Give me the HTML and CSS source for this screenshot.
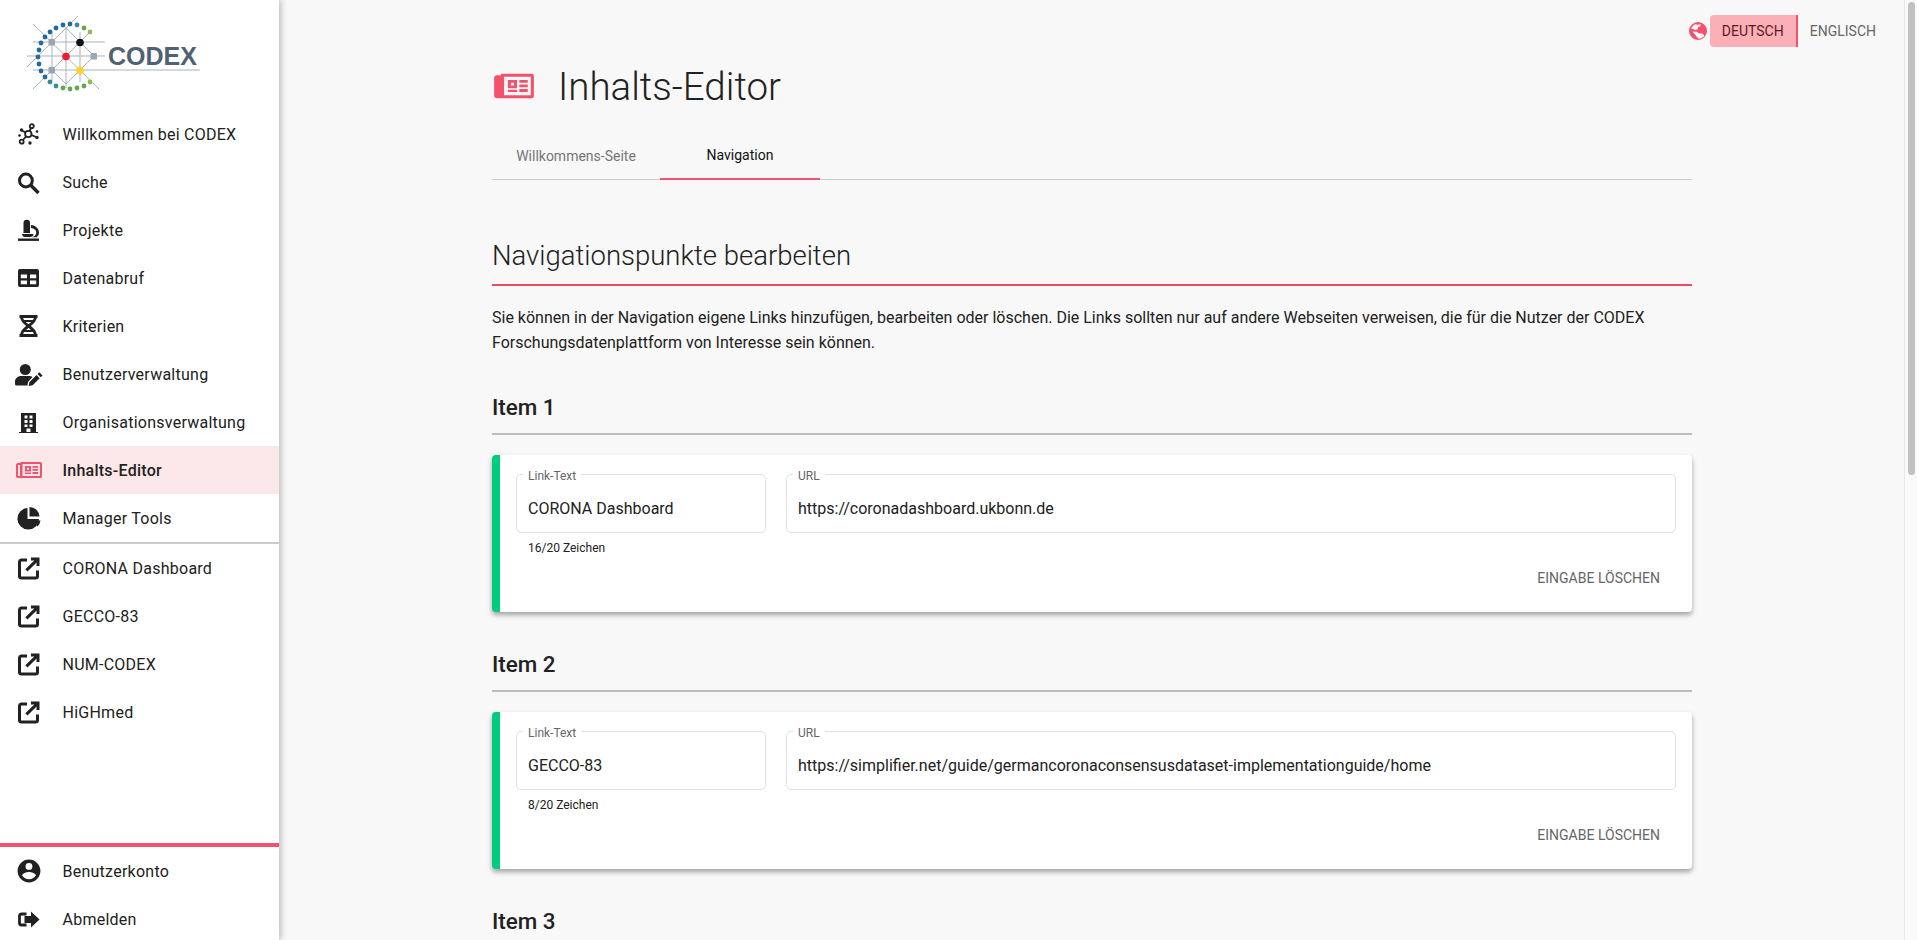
FILE: index.html
```html
<!DOCTYPE html>
<html lang="de">
<head>
    <meta charset="UTF-8">
    <meta name="viewport" content="width=device-width, initial-scale=1.0">
    <title>Inhalts-Editor</title>
    <link rel="stylesheet" href="styles.css">
</head>
<body>
    <!-- Seitennavigation -->
    <aside class="sidebar">
        <div class="logo">
            <svg width="210" height="100" viewBox="0 0 210 100">
                <g stroke="#aab3bd" stroke-width="1" fill="none">
                    <path d="M33 42H105M27 56H105M33 70H200"/>
                    <path d="M52 31V81M66 27V88M80 32V82"/>
                    <path d="M33 24L99 89M78 16L27 67M33 89L90 32M94 56L66 84M66 28L94 56M52 70L66 84"/>
                </g>
                <g fill="#1f6aa5">
                    <circle cx="63" cy="25" r="2.400"/><circle cx="70" cy="24" r="2.400"/><circle cx="56" cy="28" r="2.400"/>
                    <circle cx="50" cy="32" r="2.400"/><circle cx="45" cy="37" r="2.400"/><circle cx="41" cy="43" r="2.400"/>
                    <circle cx="39" cy="50" r="2.400"/><circle cx="38" cy="57" r="2.400"/><circle cx="39" cy="64" r="2.400"/>
                    <circle cx="41" cy="71" r="2.400"/><circle cx="45" cy="77" r="2.400"/>
                </g>
                <g fill="#3a8a9a">
                    <circle cx="77" cy="25" r="2.400"/><circle cx="50" cy="82" r="2.400"/><circle cx="56" cy="86" r="2.400"/>
                </g>
                <g fill="#5fa84f">
                    <circle cx="84" cy="28" r="2.400"/><circle cx="63" cy="88" r="2.400"/><circle cx="70" cy="89" r="2.400"/>
                    <circle cx="77" cy="88" r="2.400"/><circle cx="84" cy="86" r="2.400"/>
                </g>
                <circle cx="90" cy="32" r="2.400" fill="#8cc04a"/>
                <circle cx="90" cy="82" r="2.400" fill="#8cc04a"/>
                <g fill="#9aa6b2">
                    <rect x="48.500" y="39" width="6.500" height="6.500" rx="1"/>
                    <rect x="90.500" y="53" width="6.500" height="6.500" rx="1"/>
                    <rect x="48.500" y="67" width="6.500" height="6.500" rx="1"/>
                </g>
                <circle cx="80" cy="42.500" r="3.800" fill="#111"/>
                <circle cx="66" cy="56.500" r="3.800" fill="#ed1c2e"/>
                <circle cx="80" cy="70.500" r="3.800" fill="#fdd32a"/>
                <text x="108" y="65" class="logo-text">CODEX</text>
            </svg>
        </div>

        <nav class="nav-main">
            <a class="nav-item">
                <svg class="icon" viewBox="0 0 24 24"><g fill="none" stroke="currentColor" stroke-width="1.800"><circle cx="11.300" cy="12" r="3.200"/><circle cx="4.700" cy="19.700" r="2"/><circle cx="14.800" cy="4.200" r="2"/><path d="M12.500 9L14 6.300M9 14.500L6 18M14.500 13L19 15M8.500 10.500L5 8.500"/></g><g fill="currentColor"><circle cx="4.500" cy="8" r="1.700"/><circle cx="2.500" cy="13.500" r="1.300"/><circle cx="20" cy="15.500" r="1.700"/><circle cx="20" cy="9.500" r="1.300"/><circle cx="13" cy="21" r="1.700"/></g></svg>
                <span>Willkommen bei CODEX</span>
            </a>
            <a class="nav-item">
                <svg class="icon" viewBox="0 0 24 24"><circle cx="8.900" cy="10.500" r="6.400" fill="none" stroke="currentColor" stroke-width="3"/><path d="M13.500 15L21.500 23" fill="none" stroke="currentColor" stroke-width="3.400"/></svg>
                <span>Suche</span>
            </a>
            <a class="nav-item">
                <svg class="icon" viewBox="0 0 24 24"><path d="M6.500 5a3.200 3.200 0 0 1 6.500 0V15H6.500Z"/><path d="M14 7c4.500.5 8 3.500 8 7.500 0 2-1 3.700-2.300 4.700H15c2.500-.5 4.300-2.200 4.300-4.700 0-2.500-2.500-4.300-5.300-4.500Z"/><path d="M5 16h11.500c0 1.700-1.500 3-3.500 3H8c-1.500 0-3-1.300-3-3Z"/><rect x="1" y="20.500" width="21" height="2.400"/></svg>
                <span>Projekte</span>
            </a>
            <a class="nav-item">
                <svg class="icon" viewBox="0 0 24 24"><path fill-rule="evenodd" d="M3 3h17a2 2 0 0 1 2 2v14a2 2 0 0 1-2 2H3a2 2 0 0 1-2-2V5a2 2 0 0 1 2-2ZM3.800 8.500v3.800h6.200V8.500ZM13 8.500v3.800h6.200V8.500ZM3.800 14.500v3.800h6.200v-3.800ZM13 14.500v3.800h6.200v-3.800Z"/></svg>
                <span>Datenabruf</span>
            </a>
            <a class="nav-item">
                <svg class="icon" viewBox="0 0 24 24"><g fill="none" stroke="currentColor"><path stroke-width="2.800" d="M2.500 2.500H20.500M2.500 21.500H20.500"/><path stroke-width="2.800" d="M4.500 3c0 8 14 10 14 18M18.500 3c0 8-14 10-14 18"/><path stroke-width="1.800" d="M6 7H17M7 17H16"/></g></svg>
                <span>Kriterien</span>
            </a>
            <a class="nav-item">
                <svg class="icon" viewBox="0 0 24 24"><circle cx="8.300" cy="7.500" r="5.500"/><path d="M4 14h8.500c1.200 0 2.200.3 3 .9L11 20l-.5 3.500H-.5A1.500 1.500 0 0 1-2 22v-2.500C-2 16.500.8 14 4 14Z"/><path d="M12.500 20l7-7 3.200 3.200-7 7-4 .8ZM20.500 12l1.800-1.800 3.200 3.200-1.800 1.800Z"/></svg>
                <span>Benutzerverwaltung</span>
            </a>
            <a class="nav-item">
                <svg class="icon" viewBox="0 0 24 24"><path fill-rule="evenodd" d="M4 3H19V22H13.500V18.500H9.500V22H4ZM7.500 5.500V8.500H10.500V5.500ZM12.500 5.500V8.500H15.500V5.500ZM7.500 10V13H10.500V10ZM12.500 10V13H15.500V10ZM7.500 14.500V17H10.500V14.500ZM12.500 14.500V17H15.500V14.500Z"/><rect x="2" y="22" width="19" height="1"/></svg>
                <span>Organisationsverwaltung</span>
            </a>
            <a class="nav-item active">
                <svg class="icon icon-news" viewBox="0 0 26 17"><path fill-rule="evenodd" d="M4.500 .5H24.500A1.500 1.500 0 0 1 26 2V15A1.500 1.500 0 0 1 24.500 16.500H2A2 2 0 0 1 0 14.500V3.500A2 2 0 0 1 2 1.500H4.500ZM2 3.500V14.500H4V3.500ZM6.500 2.500V14.500H24V2.500ZM9 4.500H15V10H9ZM11 6.300V8.200H13V6.300ZM16.500 4.500H22V6.300H16.500ZM16.500 7.500H22V9.300H16.500ZM16.500 10.500H22V12.500H16.500ZM9 11H15V12.500H9Z"/></svg>
                <span>Inhalts-Editor</span>
            </a>
            <a class="nav-item">
                <svg class="icon" viewBox="0 0 24 24"><path d="M10.500 2V13H22A10.800 10.800 0 1 1 10.500 2Z"/><path d="M12.500 1A10 10 0 0 1 22.500 10.500H12.500Z"/><path d="M14.500 14.500H23.500A10 10 0 0 1 20.500 20.500Z"/></svg>
                <span>Manager Tools</span>
            </a>
        </nav>

        <nav class="nav-links">
            <a class="nav-item">
                <svg class="icon" viewBox="0 0 24 24"><path d="M10 4H4.500A2 2 0 0 0 2.500 6V20A2 2 0 0 0 4.500 22H18.500A2 2 0 0 0 20.500 20V14.500" fill="none" stroke="currentColor" stroke-width="3"/><path d="M14 1.500H22.500V10H19.500V6.500L10.500 15.500L8.300 13.300L17.300 4.500H14Z"/></svg>
                <span>CORONA Dashboard</span>
            </a>
            <a class="nav-item">
                <svg class="icon" viewBox="0 0 24 24"><path d="M10 4H4.500A2 2 0 0 0 2.500 6V20A2 2 0 0 0 4.500 22H18.500A2 2 0 0 0 20.500 20V14.500" fill="none" stroke="currentColor" stroke-width="3"/><path d="M14 1.500H22.500V10H19.500V6.500L10.500 15.500L8.300 13.300L17.300 4.500H14Z"/></svg>
                <span>GECCO-83</span>
            </a>
            <a class="nav-item">
                <svg class="icon" viewBox="0 0 24 24"><path d="M10 4H4.500A2 2 0 0 0 2.500 6V20A2 2 0 0 0 4.500 22H18.500A2 2 0 0 0 20.500 20V14.500" fill="none" stroke="currentColor" stroke-width="3"/><path d="M14 1.500H22.500V10H19.500V6.500L10.500 15.500L8.300 13.300L17.300 4.500H14Z"/></svg>
                <span>NUM-CODEX</span>
            </a>
            <a class="nav-item">
                <svg class="icon" viewBox="0 0 24 24"><path d="M10 4H4.500A2 2 0 0 0 2.500 6V20A2 2 0 0 0 4.500 22H18.500A2 2 0 0 0 20.500 20V14.500" fill="none" stroke="currentColor" stroke-width="3"/><path d="M14 1.500H22.500V10H19.500V6.500L10.500 15.500L8.300 13.300L17.300 4.500H14Z"/></svg>
                <span>HiGHmed</span>
            </a>
        </nav>

        <nav class="nav-bottom">
            <a class="nav-item">
                <svg class="icon" viewBox="1.500 1.500 21 21"><path d="M12,19.2C9.5,19.2 7.29,17.92 6,16C6.03,14 10,12.9 12,12.9C14,12.9 17.97,14 18,16C16.71,17.92 14.5,19.2 12,19.2M12,5A3,3 0 0,1 15,8A3,3 0 0,1 12,11A3,3 0 0,1 9,8A3,3 0 0,1 12,5M12,2A10,10 0 0,0 2,12A10,10 0 0,0 12,22A10,10 0 0,0 22,12A10,10 0 0,0 12,2Z"/></svg>
                <span>Benutzerkonto</span>
            </a>
            <a class="nav-item">
                <svg class="icon" viewBox="0 0 24 24"><path d="M9.500 7H4.500A2 2 0 0 0 2.500 9V16A2 2 0 0 0 4.500 18H9.500" fill="none" stroke="currentColor" stroke-width="2.800"/><path d="M14 4.500L22.500 12.500L14 20.500V16H7.500V9H14Z"/></svg>
                <span>Abmelden</span>
            </a>
        </nav>
    </aside>

    <main class="main">
        <div class="lang-bar">
            <svg class="lang-icon" viewBox="2 2 20 20"><path fill-rule="evenodd" d="M12 2a10 10 0 1 0 0 20 10 10 0 0 0 0-20ZM15 4.600l-.5 2.400-2.500.5-.5 2.500-2.500 1-3.500-1.500L4.200 10C5 7.500 7 5.300 9 4.500l2 .5ZM6 12.500l4.500.3 2.500 1.700 4.500.5 1.500 2.500c-1.500 1.800-4 3-6.500 3L10 17.500Z"/></svg>
            <button class="lang-btn lang-active">Deutsch</button>
            <button class="lang-btn">Englisch</button>
        </div>

        <div class="content">
            <header class="page-head">
                <svg class="page-icon" viewBox="0 0 26 17"><path fill-rule="evenodd" d="M4.500 .5H24.500A1.500 1.500 0 0 1 26 2V15A1.500 1.500 0 0 1 24.500 16.500H2A2 2 0 0 1 0 14.500V3.500A2 2 0 0 1 2 1.500H4.500ZM6.500 2.500V14.500H24V2.500ZM9 4.500H15V10H9ZM11 6.300V8.200H13V6.300ZM16.500 4.500H22V6.300H16.500ZM16.500 7.500H22V9.300H16.500ZM16.500 10.500H22V12.500H16.500ZM9 11H15V12.500H9Z"/></svg>
                <h1>Inhalts-Editor</h1>
            </header>

            <div class="tabs">
                <a class="tab">Willkommens-Seite</a>
                <a class="tab tab-active">Navigation</a>
            </div>

            <h2>Navigationspunkte bearbeiten</h2>
            <p class="intro">Sie können in der Navigation eigene Links hinzufügen, bearbeiten oder löschen. Die Links sollten nur auf andere Webseiten verweisen, die für die Nutzer der CODEX Forschungsdatenplattform von Interesse sein können.</p>

            <section class="item">
                <h3>Item 1</h3>
                <div class="card">
                    <div class="fields">
                        <div class="field-wrap field-short">
                            <fieldset class="field">
                                <legend>Link-Text</legend>
                                <span>CORONA Dashboard</span>
                            </fieldset>
                            <div class="hint">16/20 Zeichen</div>
                        </div>
                        <div class="field-wrap field-long">
                            <fieldset class="field">
                                <legend>URL</legend>
                                <span>https://coronadashboard.ukbonn.de</span>
                            </fieldset>
                        </div>
                    </div>
                    <div class="card-actions"><button class="clear-btn">Eingabe löschen</button></div>
                </div>
            </section>

            <section class="item">
                <h3>Item 2</h3>
                <div class="card">
                    <div class="fields">
                        <div class="field-wrap field-short">
                            <fieldset class="field">
                                <legend>Link-Text</legend>
                                <span>GECCO-83</span>
                            </fieldset>
                            <div class="hint">8/20 Zeichen</div>
                        </div>
                        <div class="field-wrap field-long">
                            <fieldset class="field">
                                <legend>URL</legend>
                                <span>https://simplifier.net/guide/germancoronaconsensusdataset-implementationguide/home</span>
                            </fieldset>
                        </div>
                    </div>
                    <div class="card-actions"><button class="clear-btn">Eingabe löschen</button></div>
                </div>
            </section>

            <section class="item">
                <h3>Item 3</h3>
            </section>
        </div>
    </main>

    <!-- Scrollleiste -->
    <div class="scrollbar"><div class="scroll-thumb"></div></div>
</body>
</html>
```

FILE: styles.css
```css
* {
    box-sizing: border-box;
}

html, body {
    height: 100%;
}

body {
    margin: 0;
    display: flex;
    overflow: hidden;
    font-family: Roboto, "Liberation Sans", sans-serif;
    background-color: #f8f8f8;
    color: #212121;
}

/* Seitennavigation */
.sidebar {
    width: 279px;
    flex-shrink: 0;
    height: 100%;
    display: flex;
    flex-direction: column;
    overflow: hidden;
    background-color: #fff;
    box-shadow: 2px 0 6px rgba(0, 0, 0, 0.25);
    z-index: 2;
}

.logo {
    height: 110px;
    flex-shrink: 0;
}

.logo-text {
    font-family: "Liberation Sans", Arial, sans-serif;
    font-size: 25px;
    font-weight: 700;
    fill: #4f6172;
}

.nav-main {
    border-bottom: 2px solid #ccc;
    height: 434px;
    flex-shrink: 0;
}

.nav-links {
    height: 299px;
    flex-shrink: 0;
}

.nav-bottom {
    flex-shrink: 0;
    border-top: 4px solid #f4516c;
}

.nav-item {
    display: flex;
    align-items: center;
    height: 48px;
    padding-left: 17px;
    gap: 21.500px;
    font-size: 16px;
    letter-spacing: 0.25px;
    color: #212121;
}

.nav-item.active {
    background-color: #fde8e9;
    font-weight: 500;
}

.icon {
    width: 24px;
    height: 24px;
    flex-shrink: 0;
    fill: currentColor;
    overflow: visible;
}

.icon-news {
    fill: #f4516c;
    width: 26px;
    margin-left: -1px;
    margin-right: -1px;
}

/* Hauptbereich */
.main {
    flex-grow: 1;
    min-width: 0;
    height: 100%;
    padding-left: 1px;
    overflow: hidden;
    position: relative;
}

.scrollbar {
    width: 13px;
    flex-shrink: 0;
    padding: 2px 2px 0 3px;
    background-color: #fafafa;
    border-left: 1px solid #e8e8e8;
}

.scroll-thumb {
    width: 7px;
    height: 473px;
    background-color: #c1c1c1;
    border-radius: 4px;
}

.lang-bar {
    position: absolute;
    top: 15px;
    right: 16px;
    display: flex;
    align-items: center;
}

.lang-icon {
    width: 18px;
    height: 18px;
    margin-right: 3px;
    fill: #f4516c;
}

.lang-btn {
    height: 32px;
    padding: 0 12px;
    border: none;
    background: none;
    font-family: inherit;
    font-size: 14px;
    text-transform: uppercase;
    color: #666;
    cursor: pointer;
}

.lang-active {
    width: 88px;
    background-color: #fbb0b8;
    border-right: 2px solid #f4516c;
    border-radius: 4px 0 0 4px;
    color: #5b1a26;
}

.content {
    width: 1200px;
    margin: 0 auto;
    padding-top: 57px;
}

.page-head {
    display: flex;
    align-items: center;
    height: 58px;
    padding-left: 2px;
    gap: 24px;
}

.page-icon {
    width: 40px;
    height: 26px;
    fill: #f4516c;
}

h1 {
    margin: 0;
    font-size: 38.500px;
    font-weight: 300;
    color: #212121;
}

.tabs {
    display: flex;
    margin-top: 17px;
    height: 48px;
    border-bottom: 1px solid #ccc;
}

.tab {
    display: flex;
    align-items: center;
    justify-content: center;
    font-size: 14px;
    color: #757575;
    width: 168px;
}

.tab-active {
    width: 160px;
    color: #111;
    border-bottom: 2px solid #f4516c;
    height: 48px;
}

h2 {
    margin: 59px 0 0;
    padding-bottom: 11px;
    border-bottom: 2px solid #ee4a62;
    font-size: 27.500px;
    line-height: 34px;
    font-weight: 300;
    color: #212121;
}

.intro {
    margin: 19px 0 0;
    font-size: 16px;
    line-height: 25px;
    color: #212121;
}

h3 {
    margin: 0;
    padding-bottom: 11px;
    border-bottom: 2px solid #bdbdbd;
    font-size: 22.400px;
    line-height: 30px;
    font-weight: 500;
}

.item {
    margin-top: 37px;
}

.card {
    height: 157px;
    margin-top: 20px;
    padding: 19px 16px 0 16px;
    background-color: #fff;
    border-left: 8px solid #00cc7e;
    border-radius: 4px;
    box-shadow: 0 3px 5px rgba(0, 0, 0, 0.35);
}

.fields {
    display: flex;
    gap: 20px;
    height: 75px;
}

.field-short {
    width: 250px;
    flex-shrink: 0;
}

.field-long {
    flex-grow: 1;
}

.field {
    margin: -8px 0 0;
    height: 67px;
    padding: 5px 11px 0;
    border: 1px solid #e0e0e0;
    border-radius: 5px;
    font-size: 16px;
    line-height: 44px;
    min-width: 0;
}

.field legend {
    margin-left: -5px;
    padding: 4px 5px 0;
    font-size: 12px;
    line-height: 12px;
    color: #666;
}

.hint {
    padding: 8px 12px 0;
    font-size: 12px;
    line-height: 14px;
}

.card-actions {
    display: flex;
    justify-content: flex-end;
    margin-top: 19px;
    padding-right: 16px;
}

.clear-btn {
    border: none;
    background: none;
    padding: 0;
    font-family: inherit;
    font-size: 14px;
    line-height: 20px;
    text-transform: uppercase;
    color: #666;
}
```
